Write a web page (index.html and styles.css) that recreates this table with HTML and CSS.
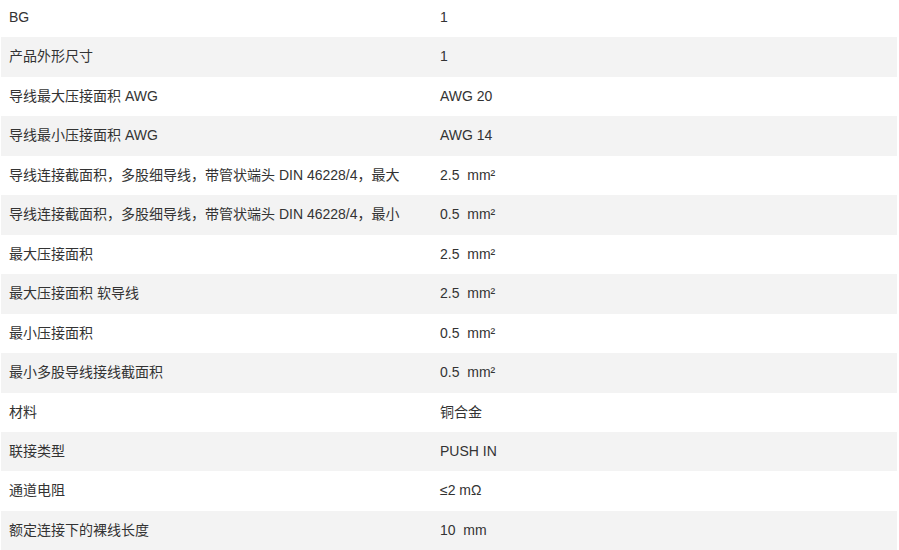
FILE: index.html
```html
<!DOCTYPE html>
<html lang="zh-CN">
<head>
  <meta charset="UTF-8" />
  <meta name="viewport" content="width=device-width, initial-scale=1.0"/>
  <title>技术参数</title>
  <link rel="stylesheet" href="styles.css">
</head>
<body>
  <table class="spec-table">
    <tbody>
      <tr><td>BG</td><td>1</td></tr>
      <tr><td>产品外形尺寸</td><td>1</td></tr>
      <tr><td>导线最大压接面积 AWG</td><td>AWG 20</td></tr>
      <tr><td>导线最小压接面积 AWG</td><td>AWG 14</td></tr>
      <tr><td>导线连接截面积，多股细导线，带管状端头 DIN 46228/4，最大</td><td>2.5  mm²</td></tr>
      <tr><td>导线连接截面积，多股细导线，带管状端头 DIN 46228/4，最小</td><td>0.5  mm²</td></tr>
      <tr><td>最大压接面积</td><td>2.5  mm²</td></tr>
      <tr><td>最大压接面积 软导线</td><td>2.5  mm²</td></tr>
      <tr><td>最小压接面积</td><td>0.5  mm²</td></tr>
      <tr><td>最小多股导线接线截面积</td><td>0.5  mm²</td></tr>
      <tr><td>材料</td><td>铜合金</td></tr>
      <tr><td>联接类型</td><td>PUSH IN</td></tr>
      <tr><td>通道电阻</td><td>≤2 mΩ</td></tr>
      <tr><td>额定连接下的裸线长度</td><td>10  mm</td></tr>
    </tbody>
  </table>
</body>
</html>
```

FILE: styles.css
```css
body {
  margin: 0;
  background-color: #fff;
  font-family: "Liberation Sans", "Noto Sans CJK SC", sans-serif;
  overflow: hidden;
}
.spec-table {
  width: 896px;
  margin: -2px 0 0 1px;
  border-collapse: collapse;
  font-size: 14px;
  color: #333;
}
.spec-table td {
  padding: 10px 8px;
  line-height: 19.45px;
  white-space: pre;
  vertical-align: middle;
}
.spec-table td:first-child {
  width: 415px;
}
.spec-table tr:nth-child(even) {
  background-color: #f3f3f3;
}
```
